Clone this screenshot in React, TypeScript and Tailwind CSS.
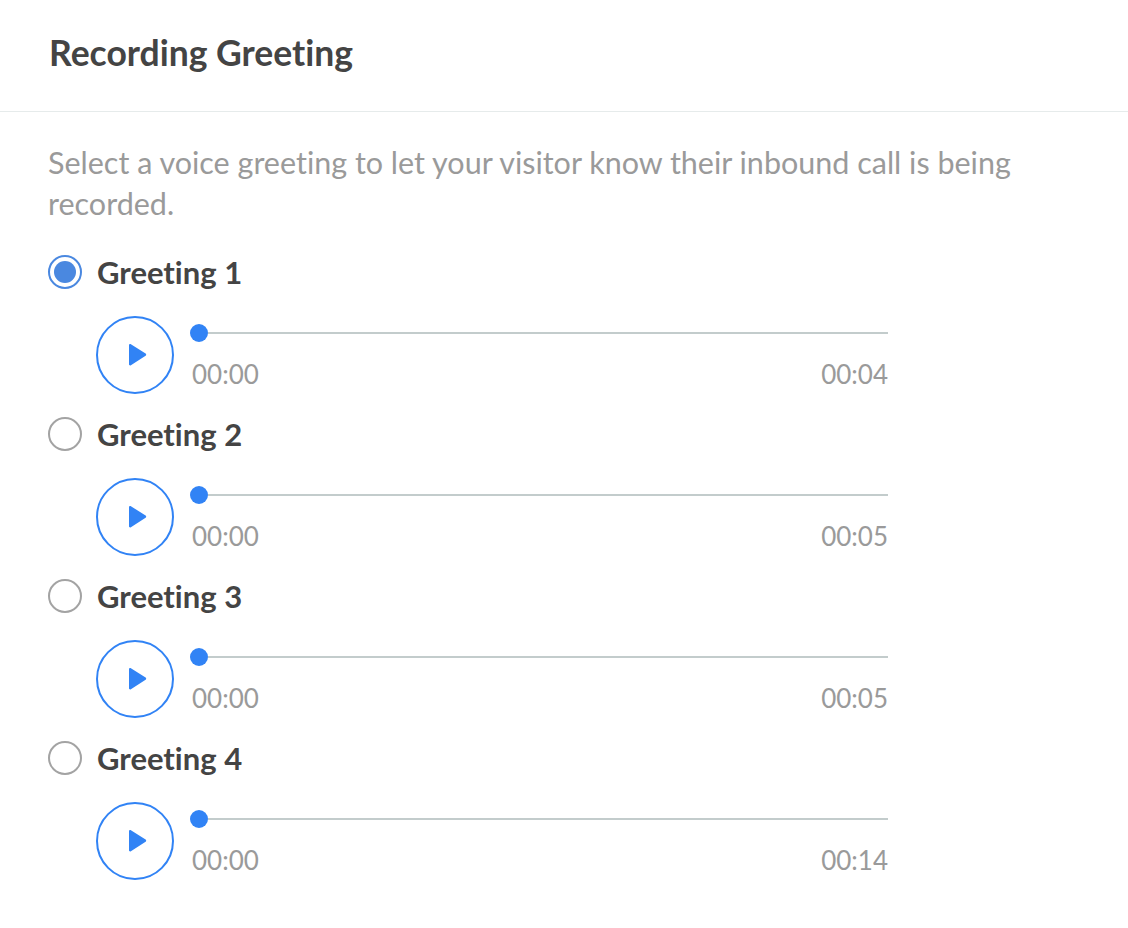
import React from "react";

const greetings = [
  { name: "Greeting 1", dur: "00:04", selected: true },
  { name: "Greeting 2", dur: "00:05", selected: false },
  { name: "Greeting 3", dur: "00:05", selected: false },
  { name: "Greeting 4", dur: "00:14", selected: false },
];

function Radio({ selected }: { selected: boolean }) {
  if (selected) {
    return (
      <span className="flex h-[34px] w-[34px] shrink-0 items-center justify-center rounded-full border-2 border-[#4a88e0] bg-white">
        <span className="h-[22px] w-[22px] rounded-full bg-[#4a88e0]" />
      </span>
    );
  }
  return <span className="h-[34px] w-[34px] shrink-0 rounded-full border-2 border-[#a3a3a3] bg-white" />;
}

function PlayIcon() {
  return (
    <svg width="22" height="24" viewBox="0 0 22 24" className="ml-[3px]">
      <path
        d="M3 2.2 C3 1.2 4 0.7 4.9 1.2 L19.6 10.6 C20.4 11.1 20.4 12.3 19.6 12.8 L4.9 22.3 C4 22.8 3 22.3 3 21.3 Z"
        fill="#3183f5"
      />
    </svg>
  );
}

function Player({ dur }: { dur: string }) {
  return (
    <div className="ml-[48px] mt-[24px] flex">
      <button className="flex h-[78px] w-[78px] shrink-0 items-center justify-center rounded-full border-2 border-[#3183f5] bg-white">
        <PlayIcon />
      </button>
      <div className="ml-[16px] flex w-[698px] flex-col">
        <div className="mt-[8px] flex h-[18px] items-center">
          <span className="h-[18px] w-[18px] shrink-0 rounded-full bg-[#3183f5]" />
          <span className="h-[2px] flex-1 bg-[#c3cccc]" />
        </div>
        <div className="mt-[17px] flex justify-between text-[26px] leading-[30px] text-[#9a9a9a]">
          <span className="ml-[2px]">00:00</span>
          <span>{dur}</span>
        </div>
      </div>
    </div>
  );
}

export default function App() {
  return (
    <div
      className="min-h-[928px] w-[1128px] bg-white [font-variant-ligatures:none]"
      style={{ fontFamily: "Lato, 'Noto Sans', sans-serif" }}
    >
      <div className="flex h-[112px] items-center border-b border-[#e6ebeb] pl-[49px] pb-[6px]">
        <h1 className="text-[35.5px] font-bold text-[#444444]">Recording Greeting</h1>
      </div>
      <div className="px-[48px] pt-[30px]">
        <p className="w-[1010px] text-[30.5px] leading-[41px] text-[#9a9a9a]">
          Select a voice greeting to let your visitor know their inbound call is being recorded.
        </p>
        <div className="mt-[28px] flex flex-col">
          {greetings.map((g, i) => (
            <div key={g.name} className={i > 0 ? "mt-[20px]" : ""}>
              <div className="flex h-[40px] items-center gap-[15px]">
                <Radio selected={g.selected} />
                <span className="text-[31px] font-bold text-[#444444]">{g.name}</span>
              </div>
              <Player dur={g.dur} />
            </div>
          ))}
        </div>
      </div>
    </div>
  );
}
